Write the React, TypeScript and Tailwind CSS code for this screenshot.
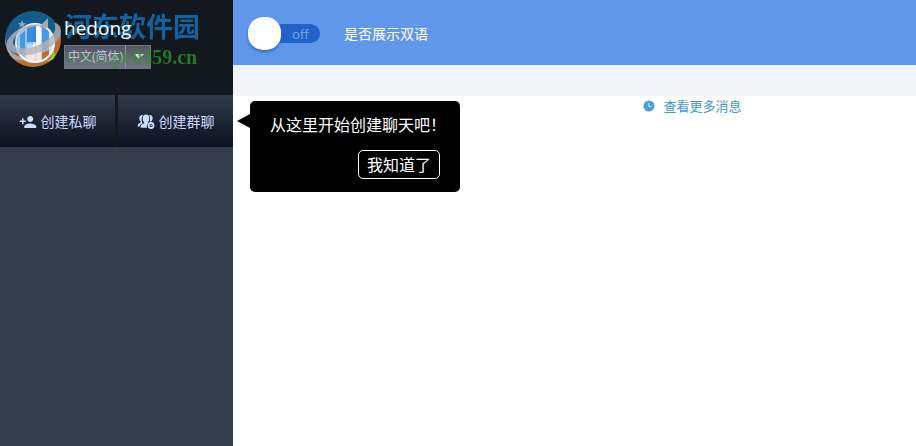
import { useState } from "react";

function Logo() {
  return (
    <svg viewBox="0 0 60 62" className="h-[62px] w-[60px] shrink-0" aria-hidden="true">
      <defs>
        <linearGradient id="tower" x1="0" y1="0" x2="0" y2="1">
          <stop offset="0" stopColor="#3f8fe0" />
          <stop offset="1" stopColor="#5fa8ea" />
        </linearGradient>
        <clipPath id="disc">
          <circle cx="29" cy="31" r="28" />
        </clipPath>
        <clipPath id="face">
          <circle cx="31" cy="35" r="19" />
        </clipPath>
      </defs>
      <g clipPath="url(#disc)">
        <rect width="60" height="62" fill="#135c8c" />
        <path d="M2 40 C12 51 32 50 45 40 C52 34 56 29 58 22 V62 H0Z" fill="#bd6e2b" />
        <path d="M1 30 C3 45 14 51 28 50 C20 54 10 53 5 48 C2 44 0 37 1 30Z" fill="#a8a5a6" />
      </g>
      <circle cx="31" cy="35" r="18" fill="#bcdcf8" />
      <g clipPath="url(#face)">
        <path d="M16 27 L21 23 V55 H16Z" fill="url(#tower)" />
        <path d="M23 18 L32 16 V34 H23Z" fill="#3487dc" />
        <path d="M23 36 H31 V55 H23Z" fill="#f5faff" />
        <path d="M32 14 H37 V55 H32Z" fill="#f5faff" />
        <path d="M38 18 L45 22 V48 H38Z" fill="#4a98e3" />
        <path d="M45 24 L50 30 V48 H45Z" fill="#d8eafb" />
        <path d="M12 44 C25 49 40 45 52 33 V56 H12Z" fill="#e6cdb9" opacity=".5" />
        <path d="M38 45 L45 42 V52 H38Z" fill="#bd6e2b" />
      </g>
      <circle cx="31" cy="35" r="19" fill="none" stroke="#f2f8ff" strokeWidth="2" />
      <path d="M49 43 C54 46 50 54 42 53 C47 51 49 48 49 43Z" fill="#85d83e" />
      <path
        d="M40 17 C25 14 10 21 3 33 C1 40 8 47 22 47 C40 46 57 34 57 23 C57 18 54 15 50 15 C55 23 45 34 29 39 C18 42 9 40 9 34 C10 28 18 21 29 19Z"
        fill="#b5b1b3"
        opacity=".8"
      />
      <path d="M11 31 C14 25 22 20 29 19 L29 39 C19 42 10 39 11 31Z" fill="#4b98df" opacity=".35" />
      <path d="M35 19 L44 10 L44 20Z" fill="#aaa7a9" />
      <path d="M18 12 L19.500 15 L22 15 L20 17 L21 20 L18 18 L15 20 L16 17 L14 15 L17 15Z" fill="#7fa6c2" />
    </svg>
  );
}

function PersonAddIcon() {
  return (
    <svg viewBox="0 0 24 24" className="size-[18px]" fill="currentColor" aria-hidden="true">
      <path d="M15 12c2.21 0 4-1.79 4-4s-1.79-4-4-4-4 1.79-4 4 1.790 4 4 4zm-9-2V7H4v3H1v2h3v3h2v-3h3v-2H6zm9 4c-2.670 0-8 1.340-8 4v2h16v-2c0-2.660-5.330-4-8-4z" />
    </svg>
  );
}

function GroupAddIcon() {
  return (
    <svg viewBox="0 0 18 18" className="size-[18px]" fill="currentColor" aria-hidden="true">
      <path d="M6 2C3.800 1.500 2.300 3 2.300 5c0 1.500.6 2.700 1.300 3.400v1C1.500 10.400.6 11 .6 13.500h2c.2-1.600 1-2.400 3.100-3.300C4.500 8.600 3.900 5 6 2z" />
      <path d="M12 2c2.200-.5 3.700 1 3.700 3 0 1.500-.6 2.700-1.300 3.400h-1.800C13.500 6.500 13.300 4 12 2z" />
      <path d="M9 1.600c2.200 0 3.300 1.600 3.300 3.800 0 1.800-.6 3-1.400 3.800v1.200a4 4 0 0 0-.7 4.300H3.600c0-2.600.5-3.200 3.500-4.500V9.200C6.300 8.400 5.700 7.200 5.700 5.400c0-2.200 1.100-3.800 3.300-3.800z" />
      <circle cx="14" cy="12.500" r="2.500" fill="none" stroke="currentColor" strokeWidth="1.800" />
      <circle cx="14" cy="12.500" r="0.800" />
    </svg>
  );
}

function Sidebar() {
  const action =
    "flex h-[52px] flex-1 items-center justify-center gap-1 bg-linear-to-b from-[#303a48] to-[#0e1121] pt-px text-sm text-[#cbdcff]";
  return (
    <aside className="w-[233px] shrink-0 bg-[#353d4c]">
      <header className="relative flex h-[95px] bg-[#13181f] pt-2 pl-1">
        <Logo />
        <div className="pt-2">
          <div className="relative z-10 text-[19px] leading-6 text-white">hedong</div>
          <div className="relative mt-[5px] w-[87px]">
            <select
              aria-label="语言"
              className="block h-6 w-full appearance-none border border-[#737783] bg-linear-to-b from-[#535866] to-[#737783] pl-[3px] text-xs text-[#c6cad8]"
            >
              <option>中文(简体)</option>
              <option>English</option>
            </select>
            <span className="pointer-events-none absolute inset-y-0 right-0 flex w-[26px] items-center justify-center border-l border-[#8a8e99]">
              <svg viewBox="0 0 10 6" className="h-[6px] w-[10px]" aria-hidden="true">
                <path d="M0 0h10L5 5z" fill="#d5dbe3" />
              </svg>
            </span>
          </div>
        </div>
        <div className="pointer-events-none absolute top-[11px] left-[65px] font-['Liberation_Serif','Noto_Sans_CJK_SC',serif] font-bold whitespace-nowrap">
          <div className="text-[27px] leading-[34px] text-[#1474bf] opacity-80">河东软件园</div>
          <div className="bg-linear-to-r from-[#269326]/30 from-30% to-[#269326]/80 to-65% bg-clip-text text-[20px] leading-6 text-transparent">
            www.pc0359.cn
          </div>
        </div>
      </header>
      <div className="flex gap-[3px] bg-[#13181f]">
        <button type="button" className={action}>
          <PersonAddIcon />
          创建私聊
        </button>
        <button type="button" className={action}>
          <GroupAddIcon />
          创建群聊
        </button>
      </div>
    </aside>
  );
}

function BilingualSwitch() {
  const [on, setOn] = useState(false);
  return (
    <label className="flex cursor-pointer items-center gap-6 text-sm text-white">
      <span className="relative flex h-[33px] w-[72px] items-center">
        <input
          type="checkbox"
          checked={on}
          onChange={(e) => setOn(e.target.checked)}
          className="peer h-[19px] w-full appearance-none rounded-full bg-[#2164c8]"
        />
        <span className="pointer-events-none absolute right-[11px] font-[Lato,sans-serif] text-sm leading-5 text-[#6b9ee8] peer-checked:right-[42px]">
          {on ? "on" : "off"}
        </span>
        <span className="pointer-events-none absolute left-0 size-[33px] rounded-[15px] bg-white shadow-[0_2px_3px_#3468b8] peer-checked:left-[39px]" />
      </span>
      是否展示双语
    </label>
  );
}

function StartTip({ onClose }: { onClose: () => void }) {
  return (
    <div
      role="dialog"
      aria-label="创建聊天"
      className="absolute top-[101px] left-[250px] flex h-[91px] w-[210px] flex-col items-end rounded-[5px] bg-black px-5 pt-3 text-base text-white"
    >
      <svg viewBox="0 0 13 14" className="absolute top-[13px] -left-[13px] h-[14px] w-[13px]" aria-hidden="true">
        <path d="M13 0v14L0 7z" />
      </svg>
      <p className="self-start whitespace-nowrap leading-6">从这里开始创建聊天吧！</p>
      <button type="button" onClick={onClose} className="mt-[13px] h-[29px] w-[82px] rounded-[5px] border border-white leading-6">
        我知道了
      </button>
    </div>
  );
}

export default function App() {
  const [tip, setTip] = useState(true);
  return (
    <div className="relative flex min-h-screen bg-white font-['Open_Sans','Noto_Sans_CJK_SC',sans-serif]">
      <Sidebar />
      <main className="min-w-0 flex-1">
        <header className="flex h-[65px] items-center bg-[#6097eb] pl-[15px] pt-[2px]">
          <BilingualSwitch />
        </header>
        <div className="h-[31px] bg-[#f2f4f9]" />
        <div className="flex justify-center pl-[236px]">
          <button type="button" className="flex items-center gap-2 text-[13px] leading-5 text-[#4299cb]">
            <svg viewBox="0 0 12 12" className="size-3" aria-hidden="true">
              <circle cx="6" cy="6" r="5.500" fill="#4b9fdd" />
              <path d="M6 3v3.500h2.500" fill="none" stroke="#d9ecfa" strokeWidth="1.200" />
            </svg>
            查看更多消息
          </button>
        </div>
      </main>
      {tip && <StartTip onClose={() => setTip(false)} />}
    </div>
  );
}
